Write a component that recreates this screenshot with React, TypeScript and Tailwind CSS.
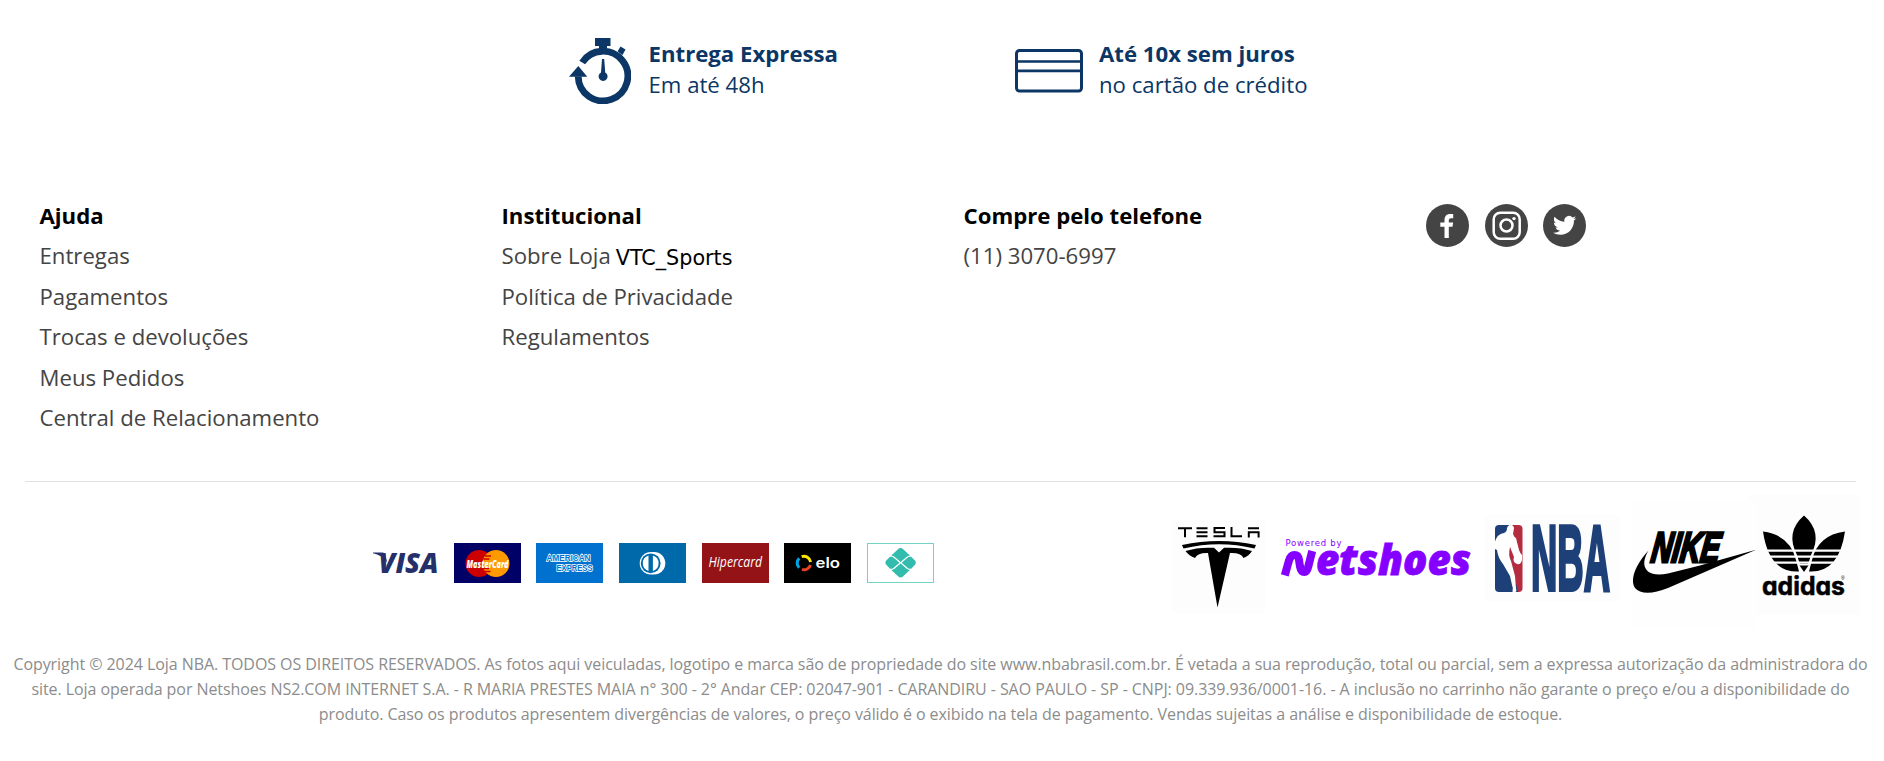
import React from "react";

type Column = { title: string; items: React.ReactNode[] };

const columns: Column[] = [
  {
    title: "Ajuda",
    items: ["Entregas", "Pagamentos", "Trocas e devoluções", "Meus Pedidos", "Central de Relacionamento"],
  },
  {
    title: "Institucional",
    items: [
      <span className="flex items-baseline gap-[5px]">
        Sobre Loja
        <span className="relative top-px font-['DejaVu_Sans',sans-serif] text-[20.700px] text-black">VTC_Sports</span>
      </span>,
      "Política de Privacidade",
      "Regulamentos",
    ],
  },
  { title: "Compre pelo telefone", items: ["(11) 3070-6997"] },
];

function Stopwatch() {
  return (
    <svg width="62" height="66" viewBox="0 0 62 66" fill="#0b3665">
      <path d="M26 0h15.500v8H38v3h-8V8h-4z" />
      <path d="M51.500 8.500l5 3-3 5.500-5-3.500z" />
      <path d="M13.200 24.500A24.800 24.800 0 1 1 9.200 38.500" fill="none" stroke="#0b3665" strokeWidth="6.800" />
      <path d="M0 38.800L9.300 28L18.300 38.800z" />
      <path d="M33 21h2.200l1 13.500a4.500 4.500 0 1 1-4.200 0z" />
    </svg>
  );
}

function CreditCard() {
  return (
    <svg width="68" height="44" viewBox="0 0 68 44" fill="none" stroke="#0b3665">
      <rect x="1.500" y="1.500" width="65" height="40.500" rx="3" strokeWidth="3" />
      <path d="M1 12.500h66M1 21.800h66" strokeWidth="2.700" />
    </svg>
  );
}

function Social() {
  return (
    <div className="flex gap-[15.500px] pt-px pl-[0.500px]">
      <svg width="43" height="43" viewBox="0 0 43 43">
        <circle cx="21.500" cy="21.500" r="21.500" fill="#444" />
        <path fill="#fff" d="M18.500 34V22.700h-4.200v-4.200h4.200v-2.300c0-4.200 2.200-6.200 5.700-6.200h3v4.200h-2c-1.700 0-2.400.8-2.400 2.400v1.900h4.300l-.6 4.200h-3.700V34z" />
      </svg>
      <svg width="43" height="43" viewBox="0 0 43 43">
        <circle cx="21.500" cy="21.500" r="21.500" fill="#444" />
        <rect x="8.700" y="8.700" width="26" height="26" rx="6.500" fill="none" stroke="#fff" strokeWidth="2.500" />
        <circle cx="21.500" cy="21.500" r="6" fill="none" stroke="#fff" strokeWidth="2.500" />
        <circle cx="29" cy="14.600" r="1.700" fill="#fff" />
      </svg>
      <svg width="43" height="43" viewBox="0 0 43 43">
        <circle cx="21.500" cy="21.500" r="21.500" fill="#444" />
        <path
          fill="#fff"
          transform="translate(10 9.700) scale(.97)"
          d="M23.953 4.570a10 10 0 01-2.825.775 4.958 4.958 0 002.163-2.723c-.951.555-2.005.959-3.127 1.184a4.920 4.920 0 00-8.384 4.482C7.690 8.095 4.067 6.130 1.640 3.162a4.822 4.822 0 00-.666 2.475c0 1.710.870 3.213 2.188 4.096a4.904 4.904 0 01-2.228-.616v.060a4.923 4.923 0 003.946 4.827 4.996 4.996 0 01-2.212.085 4.936 4.936 0 004.604 3.417 9.867 9.867 0 01-6.102 2.105c-.39 0-.779-.023-1.170-.067a13.995 13.995 0 007.557 2.209c9.053 0 13.998-7.496 13.998-13.985 0-.21 0-.42-.015-.63A9.935 9.935 0 0024 4.590z"
        />
      </svg>
    </div>
  );
}

function Payments() {
  return (
    <div className="flex gap-[15.670px]">
      <svg width="67" height="40" viewBox="0 0 67 40" className="overflow-visible">
        <text x="7.500" y="29.800" fontFamily="Open Sans, sans-serif" fontWeight="800" fontStyle="italic" fontSize="28.500" textLength="60" lengthAdjust="spacingAndGlyphs" fill="#25306b">VISA</text>
        <path d="M2 9.500h9.500q2 0 2.700 2l2 8Q11 12 2 10.200z" fill="#25306b" />
      </svg>
      <svg width="67" height="40" viewBox="0 0 67 40">
        <rect width="67" height="40" fill="#000066" />
        <circle cx="25" cy="20.500" r="13.500" fill="#c00" />
        <circle cx="42" cy="20.500" r="13.500" fill="#f90" />
        <path d="M31 13h6M29.500 16h6M29 25.500h6M30.500 28.500h6" stroke="#c00" strokeWidth="1.300" />
        <text x="12.500" y="24.500" fontFamily="Open Sans, sans-serif" fontWeight="800" fontStyle="italic" fontSize="10.500" textLength="42" lengthAdjust="spacingAndGlyphs" fill="#fff">MasterCard</text>
      </svg>
      <svg width="67" height="40" viewBox="0 0 67 40" fontFamily="Liberation Sans, sans-serif" fontWeight="700" fontSize="9" fill="#0071ce" stroke="#fff" strokeWidth="1.500" paintOrder="stroke">
        <rect width="67" height="40" fill="#0071ce" stroke="none" />
        <text x="10.500" y="18.300" textLength="44" lengthAdjust="spacingAndGlyphs">AMERICAN</text>
        <text x="20.500" y="28.300" textLength="36" lengthAdjust="spacingAndGlyphs">EXPRESS</text>
      </svg>
      <svg width="67" height="40" viewBox="0 0 67 40">
        <rect width="67" height="40" fill="#0069aa" />
        <path d="M32 9h3a11.300 11.300 0 0 1 0 22.600h-3a11.300 11.300 0 0 1 0-22.600z" fill="#fff" />
        <circle cx="31.700" cy="20.300" r="9.900" fill="#0069aa" />
        <path d="M29.500 12.500a8.200 8.200 0 0 0 0 15.600zM33.900 12.500a8.200 8.200 0 0 1 0 15.600z" fill="#fff" />
      </svg>
      <svg width="67" height="40" viewBox="0 0 67 40">
        <rect width="67" height="40" fill="#931317" />
        <text x="6.500" y="24" fontFamily="Open Sans, sans-serif" fontWeight="500" fontStyle="italic" fontSize="14" textLength="53.500" lengthAdjust="spacingAndGlyphs" fill="#fff">Hipercard</text>
      </svg>
      <svg width="67" height="40" viewBox="0 0 67 40">
        <rect width="67" height="40" fill="#000" />
        <g fill="none" strokeWidth="3">
          <path d="M17.700 13.700A6.700 6.700 0 0 1 26.600 18.900" stroke="#ffe600" />
          <path d="M26.500 22A6.700 6.700 0 0 1 18 26.400" stroke="#ef4123" />
          <path d="M15.200 24.800A6.700 6.700 0 0 1 15.200 15.200" stroke="#00a4e0" />
        </g>
        <text x="31.500" y="25.300" fontFamily="Inter, sans-serif" fontWeight="600" fontSize="14" textLength="24.500" lengthAdjust="spacingAndGlyphs" fill="#fff">elo</text>
      </svg>
      <svg width="67" height="40" viewBox="0 0 67 40">
        <rect x=".5" y=".5" width="66" height="39" fill="#fff" stroke="#77d2c6" />
        <g fill="#32bcad">
          <path d="M24.300 12.500l6.700-6.300a3.700 3.700 0 0 1 5.200 0l6.700 6.300q-2 .2-3.200 1.300l-6.100 5.300-6.100-5.300q-1.200-1.100-3.200-1.300z" />
          <path d="M24.300 27l6.700 6.300a3.700 3.700 0 0 0 5.200 0l6.700-6.300q-2-.2-3.200-1.300l-6.100-5.300-6.100 5.300q-1.200 1.100-3.200 1.300z" />
          <path d="M23 13.700h1.500q1.200 0 2.200 1l5.800 5-5.800 5q-1 1-2.200 1H23l-3.200-3.400a3.100 3.100 0 0 1 0-5.200zM44.200 13.700h-1.500q-1.200 0-2.200 1l-5.800 5 5.800 5q1 1 2.200 1h1.500l3.200-3.400a3.100 3.100 0 0 0 0-5.200z" />
        </g>
      </svg>
    </div>
  );
}

function Tesla() {
  return (
    <svg width="93" height="93" viewBox="0 0 93 93">
      <rect width="93" height="93" fill="#fdfdfd" />
      <g transform="translate(-1172 -520)">
        <g stroke="#000" strokeWidth="2" fill="none">
          <path d="M1178 528.200h14M1185 529v8.200M1196.500 528.200h11M1196.500 532.200h11M1196.500 536.200h11M1225 528h-10.500v4.200h10v4h-11M1231.500 527v9.200h10.500M1248 528.200h11M1248.800 537.500v-5.300h9.800v5.300" />
        </g>
        <path d="M1182 545Q1219 537 1256 545L1254.500 548.500Q1219 540 1183.500 548.500z" />
        <path d="M1185.500 551Q1198 547 1214 547.800L1219 552.500L1224 547.800Q1240 547 1252 551Q1249 556 1243.500 558Q1241 552.500 1230 553L1217.500 607.500L1208 553Q1198 552.500 1195 558Q1189 556 1185.500 551z" />
      </g>
    </svg>
  );
}

function Netshoes() {
  return (
    <svg width="192" height="46" viewBox="1280 536 192 46" fill="#8500ff" className="overflow-visible">
      <text x="1285.500" y="545.500" fontFamily="DejaVu Sans, sans-serif" fontSize="8.500" textLength="56" lengthAdjust="spacing">Powered by</text>
      <path d="M1284.800 575.300L1289 560.500Q1290.700 555 1294.500 555Q1298.300 555 1299 560L1300 566.500Q1301 572 1304.300 572Q1307 572 1308.300 566.500L1312.200 551" fill="none" stroke="#8500ff" strokeWidth="8" />
      <text x="1316" y="575" fontFamily="Open Sans, sans-serif" fontWeight="800" fontStyle="italic" fontSize="42" textLength="155" lengthAdjust="spacingAndGlyphs" stroke="#8500ff" strokeWidth=".8">etshoes</text>
    </svg>
  );
}

function Nba() {
  return (
    <svg width="135" height="86" viewBox="1485 515 135 86" className="overflow-visible">
      <rect x="1485" y="515" width="135" height="86" fill="#fdfdfd" />
      <rect x="1495" y="525" width="14" height="67" rx="4" fill="#1d4079" />
      <rect x="1508" y="525" width="14.500" height="67" rx="4" fill="#b52b3f" />
      <path fill="#1d4079" d="M1503 525h6v3l-4 8 13 56h-13z" />
      <path fill="#fff" d="M1508 526q5-3 6 2l-1 6q1 3 3 4l3 12q1 3 3 5v5q-1 5-5 4-5-2-3-7l-2-5-2-5q-2 8 1 14l4 15 1 12q1 3-.500 4h-3q1-4-.500-7l-2-9-7-12q-5-6-6-14l-2-1q-2-4 1-10 2-5 8-6 3-1 3-5z" />
      <text x="1531" y="590" fontFamily="Liberation Sans, sans-serif" fontWeight="700" fontSize="92" textLength="79" lengthAdjust="spacingAndGlyphs" fill="#1d4079" stroke="#1d4079" strokeWidth="3.800">NBA</text>
    </svg>
  );
}

function Nike() {
  return (
    <svg width="126" height="128" viewBox="1631 501 126 128" className="overflow-visible">
      <rect x="1631" y="501" width="126" height="128" fill="#fefefe" />
      <text transform="translate(1650 561.500) skewX(-8)" fontFamily="Liberation Sans, sans-serif" fontWeight="700" fontStyle="italic" fontSize="42.500" textLength="68.500" lengthAdjust="spacingAndGlyphs" stroke="#000" strokeWidth="3">NIKE</text>
      <path d="M1648.500 550.500C1644 558 1642 566 1648 571.500Q1654 576 1668 573.500L1700 565.500L1756 549.700L1668 588C1652 594.500 1640 594 1635 588C1629 578 1638 562 1648.500 550.500z" />
    </svg>
  );
}

function Adidas() {
  return (
    <svg width="112" height="120" viewBox="1748 495 112 120">
      <rect x="1748" y="495" width="112" height="120" fill="#fdfdfd" />
      <path d="M1804 515.500Q1823 532 1811 555Q1808 566 1804 572Q1800 566 1797 555Q1785 532 1804 515.500z" />
      <path d="M1763 531.500Q1790 535 1796 560L1799 571.500Q1769 573 1763 531.500zM1845 531.500Q1818 535 1812 560L1809 571.500Q1839 573 1845 531.500z" />
      <path d="M1762 550.700h84M1762 556.700h84M1762 562.700h84" stroke="#fdfdfd" strokeWidth="2.200" />
      <path d="M1797.500 564h13l-5 9h-3z" fill="#fdfdfd" />
      <path d="M1799.500 565.500h9l-4.500 6.500z" />
      <text x="1762" y="594.500" fontFamily="Inter, sans-serif" fontWeight="700" fontSize="25" textLength="83" lengthAdjust="spacingAndGlyphs" stroke="#000" strokeWidth=".5" className="[font-feature-settings:'cv11']">adidas</text>
      <text x="1841" y="580" fontFamily="Liberation Sans, sans-serif" fontSize="5">®</text>
    </svg>
  );
}

export default function App() {
  return (
    <footer className="flex h-[761px] w-[1884px] flex-col overflow-hidden bg-white font-['Open_Sans',sans-serif]">
      <div className="flex h-[203px] items-start pl-[569px] text-[22.200px] leading-[31px] text-[#0b3665]">
        <div className="flex w-[446px] gap-[17.500px] pt-[38px]">
          <Stopwatch />
          <div className="whitespace-nowrap">
            <div className="font-bold">Entrega Expressa</div>
            <div>Em até 48h</div>
          </div>
        </div>
        <div className="flex gap-[16px] pt-[38px]">
          <div className="pt-[10.500px]"><CreditCard /></div>
          <div className="whitespace-nowrap">
            <div className="font-bold">Até 10x sem juros</div>
            <div>no cartão de crédito</div>
          </div>
        </div>
      </div>

      <div className="mr-[28px] ml-[25px] flex h-[279px] border-b border-[#e0e0e0] pl-[14.500px] text-[22.200px] leading-[40.400px] text-[#444]">
        {columns.map((c) => (
          <div key={c.title} className="-mt-[7px] w-[462px] whitespace-nowrap">
            <h3 className="font-bold text-black">{c.title}</h3>
            <ul>
              {c.items.map((item, i) => (
                <li key={i} className="h-[40.400px]">{item}</li>
              ))}
            </ul>
          </div>
        ))}
        <Social />
      </div>

      <div className="flex h-[166px] items-start pl-[371px]">
        <div className="w-[801px] pt-[61px]"><Payments /></div>
        <div className="pt-[38px]"><Tesla /></div>
        <div className="pt-[54px] pl-[15px]"><Netshoes /></div>
        <div className="pt-[33px] pl-[13px]"><Nba /></div>
        <div className="relative z-10 pt-[19px] pl-[11px]"><Nike /></div>
        <div className="-ml-[9px] pt-[13px]"><Adidas /></div>
      </div>

      <div className="w-full pt-[4px] pr-[3px] text-center text-[16px] leading-[25px] tracking-[-0.065px] whitespace-nowrap text-[#8c8c8c]">
        <p>Copyright © 2024 Loja NBA. TODOS OS DIREITOS RESERVADOS. As fotos aqui veiculadas, logotipo e marca são de propriedade do site www.nbabrasil.com.br. É vetada a sua reprodução, total ou parcial, sem a expressa autorização da administradora do</p>
        <p>site. Loja operada por Netshoes NS2.COM INTERNET S.A. - R MARIA PRESTES MAIA n° 300 - 2° Andar CEP: 02047-901 - CARANDIRU - SAO PAULO - SP - CNPJ: 09.339.936/0001-16. - A inclusão no carrinho não garante o preço e/ou a disponibilidade do</p>
        <p>produto. Caso os produtos apresentem divergências de valores, o preço válido é o exibido na tela de pagamento. Vendas sujeitas a análise e disponibilidade de estoque.</p>
      </div>
    </footer>
  );
}
